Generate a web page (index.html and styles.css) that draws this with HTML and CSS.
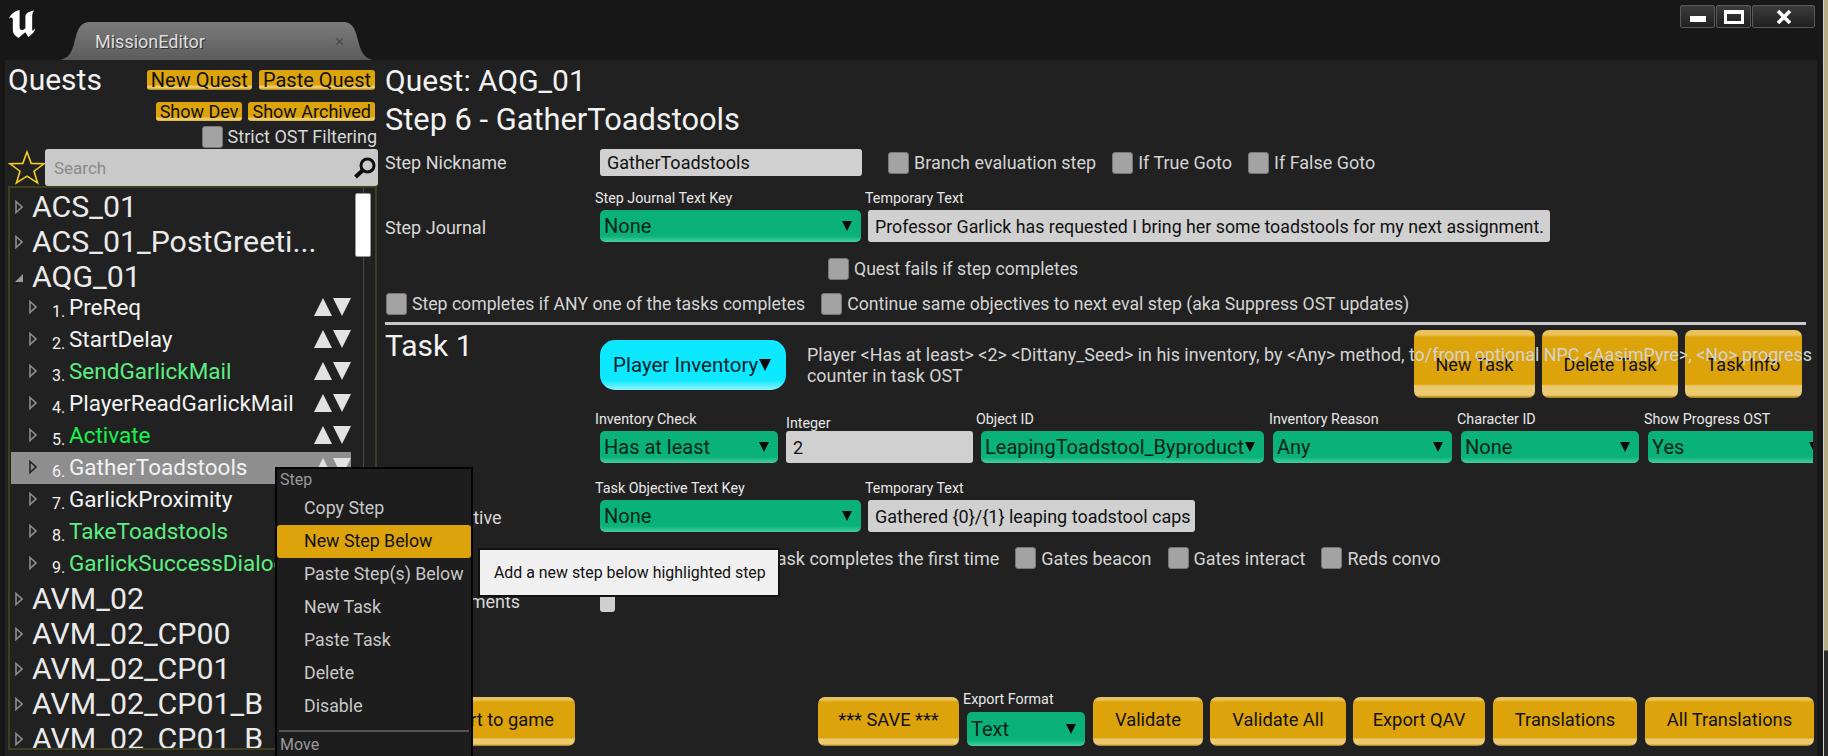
FILE: index.html
```html
<!DOCTYPE html>
<html lang="en">
  <head>
    <meta charset="UTF-8" />
    <title>MissionEditor</title>
    <link rel="stylesheet" href="styles.css">
  </head>
  <body>
    <svg class="defs" width="0" height="0">
      <symbol id="tw" viewBox="0 0 8 14"><path d="M1 1.5 L7 7 L1 12.5 Z" fill="none" stroke="currentColor" stroke-width="1.6"/></symbol>
    </svg>

    <header class="titlebar">
      <svg class="ue-logo" viewBox="0 0 30 30"><path d="M1 10 C3 5 7 2 12 1 L12 19 C12 22 15 23 18 20 L18 8 C18 5 20 3 27 1.5 C25 4 25 6 25 9 L25 21 C25 23 26 23 28 20 C28 24 24 27 21 29 L18 24 C15 26 13 28 11 30 C8 28 5 26 5 22 L5 11 C5 9 3 8 1 10 Z" fill="#fff"/></svg>
      <div class="tab">
        <span class="tab-label">MissionEditor</span>
        <span class="tab-close">×</span>
      </div>
      <div class="win-btns">
        <div class="win-btn win-min"><i></i></div>
        <div class="win-btn win-max"><i></i></div>
        <div class="win-btn win-close">
          <svg width="16" height="16" viewBox="0 0 16 16"><path d="M2 2 L14 14 M14 2 L2 14" stroke="#fff" stroke-width="3.6"/></svg>
        </div>
      </div>
    </header>

    <div class="panel">
      <aside class="sidebar">
        <div class="side-head">
          <h2>Quests</h2>
          <div class="side-btns">
            <button class="mini">New Quest</button>
            <button class="mini">Paste Quest</button>
          </div>
        </div>
        <div class="side-btns second">
          <button class="mini small">Show Dev</button>
          <button class="mini small">Show Archived</button>
        </div>
        <label class="strict"><span class="cb"></span>Strict OST Filtering</label>
        <div class="search-row">
          <svg class="star" width="38" height="35" viewBox="0 0 38 35"><path d="M19 2 L23.2 13.4 L36 13.8 L26 21.2 L29.6 33 L19 26.2 L8.4 33 L12 21.2 L2 13.8 L14.8 13.4 Z" fill="none" stroke="#f2cb24" stroke-width="1.6"/></svg>
          <div class="search">
            <span>Search</span>
            <svg width="24" height="24" viewBox="0 0 24 24"><circle cx="14.5" cy="9.5" r="6.5" fill="none" stroke="#0c0c0c" stroke-width="3"/><path d="M9.5 14.5 L2.5 21" stroke="#0c0c0c" stroke-width="4"/></svg>
          </div>
        </div>

        <div class="tree">
          <div class="scroll-track"></div>
          <div class="scroll-thumb"></div>
          <div class="quest"><svg class="tw"><use href="#tw"/></svg>ACS_01</div>
          <div class="quest"><svg class="tw"><use href="#tw"/></svg>ACS_01_PostGreeti...</div>
          <div class="quest"><span class="tw-open"></span>AQG_01</div>
          <ul class="steps">
            <li class="step"><svg class="tw"><use href="#tw"/></svg><span class="num">1.</span><span class="name">PreReq</span><span class="order"><i class="up"></i><i class="down"></i></span></li>
            <li class="step"><svg class="tw"><use href="#tw"/></svg><span class="num">2.</span><span class="name">StartDelay</span><span class="order"><i class="up"></i><i class="down"></i></span></li>
            <li class="step"><svg class="tw"><use href="#tw"/></svg><span class="num">3.</span><span class="name soft-green">SendGarlickMail</span><span class="order"><i class="up"></i><i class="down"></i></span></li>
            <li class="step"><svg class="tw"><use href="#tw"/></svg><span class="num">4.</span><span class="name">PlayerReadGarlickMail</span><span class="order"><i class="up"></i><i class="down"></i></span></li>
            <li class="step"><svg class="tw"><use href="#tw"/></svg><span class="num">5.</span><span class="name green">Activate</span><span class="order"><i class="up"></i><i class="down"></i></span></li>
            <li class="step selected"><svg class="tw"><use href="#tw"/></svg><span class="num">6.</span><span class="name">GatherToadstools</span><span class="order"><i class="up"></i><i class="down"></i></span></li>
            <li class="step"><svg class="tw"><use href="#tw"/></svg><span class="num">7.</span><span class="name">GarlickProximity</span></li>
            <li class="step"><svg class="tw"><use href="#tw"/></svg><span class="num">8.</span><span class="name soft-green">TakeToadstools</span></li>
            <li class="step"><svg class="tw"><use href="#tw"/></svg><span class="num">9.</span><span class="name soft-green">GarlickSuccessDialog</span></li>
          </ul>
          <div class="quest"><svg class="tw"><use href="#tw"/></svg>AVM_02</div>
          <div class="quest"><svg class="tw"><use href="#tw"/></svg>AVM_02_CP00</div>
          <div class="quest"><svg class="tw"><use href="#tw"/></svg>AVM_02_CP01</div>
          <div class="quest"><svg class="tw"><use href="#tw"/></svg>AVM_02_CP01_B</div>
          <div class="quest"><svg class="tw"><use href="#tw"/></svg>AVM_02_CP01_B</div>
        </div>
      </aside>

      <main class="editor">
        <h1 class="quest-title">Quest: AQG_01</h1>
        <h1 class="step-title">Step 6 - GatherToadstools</h1>

        <div class="row nick-row">
          <div class="row-label">Step Nickname</div>
          <div class="input nick">GatherToadstools</div>
          <label class="check branch"><span class="cb"></span>Branch evaluation step</label>
          <label class="check"><span class="cb"></span>If True Goto</label>
          <label class="check"><span class="cb"></span>If False Goto</label>
        </div>

        <div class="row journal-row">
          <div class="row-label">Step Journal</div>
          <div class="field w-key">
            <div class="field-label">Step Journal Text Key</div>
            <div class="select">None</div>
          </div>
          <div class="field">
            <div class="field-label temp-label">Temporary Text</div>
            <div class="input journal-text">Professor Garlick has requested I bring her some toadstools for my next assignment.</div>
          </div>
        </div>

        <div class="row fails-row">
          <label class="check"><span class="cb"></span>Quest fails if step completes</label>
        </div>

        <div class="row any-row">
          <label class="check"><span class="cb"></span>Step completes if ANY one of the tasks completes</label>
          <label class="check"><span class="cb"></span>Continue same objectives to next eval step (aka Suppress OST updates)</label>
        </div>

        <hr class="divider" />

        <div class="row task-row">
          <h2 class="task-title">Task 1</h2>
          <button class="type-btn">Player Inventory</button>
          <div class="task-btns">
            <button class="gold tall w-new">New Task</button>
            <button class="gold tall w-del">Delete Task</button>
            <button class="gold tall w-info">Task Info</button>
          </div>
          <p class="task-desc">Player &lt;Has at least&gt; &lt;2&gt; &lt;Dittany_Seed&gt; in his inventory, by &lt;Any&gt; method, to/from optional NPC &lt;AasimPyre&gt;, &lt;No&gt; progress<br />counter in task OST</p>
        </div>

        <div class="row params-row">
          <div class="field w-check">
            <div class="field-label">Inventory Check</div>
            <div class="select">Has at least</div>
          </div>
          <div class="field w-int">
            <div class="field-label int-label">Integer</div>
            <div class="input">2</div>
          </div>
          <div class="field w-obj">
            <div class="field-label">Object ID</div>
            <div class="select">LeapingToadstool_Byproduct</div>
          </div>
          <div class="field w-reason">
            <div class="field-label">Inventory Reason</div>
            <div class="select">Any</div>
          </div>
          <div class="field w-char">
            <div class="field-label">Character ID</div>
            <div class="select">None</div>
          </div>
          <div class="field w-show">
            <div class="field-label">Show Progress OST</div>
            <div class="select">Yes</div>
          </div>
        </div>

        <div class="row objective-row">
          <div class="row-label">Task Objective</div>
          <div class="field w-key">
            <div class="field-label">Task Objective Text Key</div>
            <div class="select">None</div>
          </div>
          <div class="field">
            <div class="field-label temp-label">Temporary Text</div>
            <div class="input objective-text">Gathered {0}/{1} leaping toadstool caps</div>
          </div>
        </div>

        <div class="row gates-row">
          <label class="check"><span>Task completes the first time</span></label>
          <label class="check"><span class="cb"></span>Gates beacon</label>
          <label class="check"><span class="cb"></span>Gates interact</label>
          <label class="check"><span class="cb"></span>Reds convo</label>
        </div>

        <div class="row req-row">
          <div class="row-label req-label">Requirements</div>
          <span class="cb light"></span>
        </div>

        <div class="bottom-bar">
          <button class="gold export-game">Export to game</button>
          <div class="bottom-right">
            <button class="gold w-save">*** SAVE ***</button>
            <div class="field w-format">
              <div class="field-label format-label">Export Format</div>
              <div class="select format">Text</div>
            </div>
            <button class="gold w-val">Validate</button>
            <button class="gold w-valall">Validate All</button>
            <button class="gold w-qav">Export QAV</button>
            <button class="gold w-trans">Translations</button>
            <button class="gold w-alltrans">All Translations</button>
          </div>
        </div>
      </main>
    </div>

    <div class="edge"></div>

    <div class="menu">
      <div class="menu-head">Step</div>
      <div class="menu-item">Copy Step</div>
      <div class="menu-item active">New Step Below</div>
      <div class="menu-item">Paste Step(s) Below</div>
      <div class="menu-item">New Task</div>
      <div class="menu-item">Paste Task</div>
      <div class="menu-item">Delete</div>
      <div class="menu-item">Disable</div>
      <div class="menu-sep"></div>
      <div class="menu-head">Move</div>
    </div>

    <div class="tooltip">Add a new step below highlighted step</div>
  </body>
</html>
```

FILE: styles.css
```css
* {
  box-sizing: border-box;
}
html,
body {
  margin: 0;
  height: 756px;
  overflow: hidden;
}
body {
  position: relative;
  background: #171717;
  font-family: Roboto, sans-serif;
  color: #d8d8d8;
  font-size: 18px;
}
.defs {
  position: absolute;
}
button {
  font-family: Roboto, sans-serif;
  border: 0;
  padding: 0;
  color: #111;
}

/* desktop behind the editor window */
.edge {
  position: absolute;
  right: 0;
  top: 0;
  width: 5px;
  height: 756px;
  border-left: 1px solid #d4d4d4;
  background: linear-gradient(#b5ad8a 0, #b5ad8a 650px, #2c2c2c 651px);
}

/* title bar */
.titlebar {
  height: 60px;
  display: flex;
  align-items: flex-end;
  padding-left: 8px;
}
.ue-logo {
  width: 29px;
  height: 29px;
  align-self: flex-start;
  margin-top: 9px;
}
.tab {
  width: 313px;
  height: 38px;
  margin-left: 23px;
  display: flex;
  align-items: center;
  justify-content: space-between;
  padding: 0 29px 0 35px;
  background: linear-gradient(#7b7b7b, #5c5c5c);
  clip-path: path("M0 38 C8 36 11 32 14 22 C17 10 19 0 30 0 L283 0 C294 0 296 10 299 22 C302 32 305 36 313 38 Z");
}
.tab-label {
  color: #dedede;
  text-shadow: 1px 1px 0 #333;
}
.tab-close {
  color: #4c4c4c;
  font-size: 17px;
}
.win-btns {
  display: flex;
  align-self: flex-start;
  gap: 1px;
  margin: 5px 13px 0 auto;
}
.win-btn {
  height: 23px;
  width: 35px;
  background: linear-gradient(#3c3c3c, #202020);
  border: 1px solid #5a5a5a;
  border-radius: 2px;
  display: flex;
  align-items: center;
  justify-content: center;
}
.win-min i {
  width: 16px;
  height: 6px;
  margin-top: 4px;
  background: #fff;
}
.win-max i {
  width: 20px;
  height: 14px;
  border: 3px solid #fff;
  border-top-width: 4px;
}
.win-close {
  width: 63px;
}

/* panel */
.panel {
  margin: 0 11px 0 5px;
  height: 696px;
  background: #212121;
  display: flex;
}

/* left list */
.sidebar {
  width: 375px;
  padding-left: 3px;
  flex: none;
}
.side-head {
  display: flex;
  justify-content: space-between;
  height: 40px;
  padding-right: 5px;
}
.side-head h2 {
  margin: 0;
  font-size: 30px;
  font-weight: 400;
  color: #f2f2f2;
  line-height: 40px;
}
.side-btns {
  display: flex;
  gap: 7px;
  margin-top: 10px;
  height: 20px;
}
.side-btns.second {
  justify-content: flex-end;
  padding-right: 5px;
  margin-top: 2px;
  gap: 6px;
  height: 19px;
}
.mini {
  height: 20px;
  padding: 0 4px;
  font-size: 20px;
  line-height: 19px;
  border-radius: 3px;
  background: linear-gradient(#dca30a 0, #dca30a 15px, #efc964 16px, #efc964 18px, #a47a0a 20px);
  white-space: nowrap;
}
.mini.small {
  height: 19px;
  font-size: 18px;
  line-height: 18px;
}
.strict {
  display: flex;
  align-items: center;
  justify-content: flex-end;
  gap: 5px;
  height: 21px;
  margin-top: 5px;
  padding-right: 3px;
  white-space: nowrap;
}
.search-row {
  display: flex;
  height: 37px;
  margin-top: 2px;
  padding-right: 2px;
}
.star {
  flex: none;
  margin-top: 1px;
}
.search {
  flex: 1;
  margin-left: -1px;
  background: #c9c9c9;
  border-radius: 3px;
  display: flex;
  align-items: center;
  justify-content: space-between;
  padding: 0 1px 0 9px;
  color: #8a8a8a;
  font-size: 17px;
}

.tree {
  position: relative;
  width: 369px;
  height: 564px;
  border: 2px solid #3f3f1e;
  overflow: hidden;
  padding-top: 1px;
}
.scroll-track {
  position: absolute;
  left: 353px;
  top: 0;
  bottom: 0;
  width: 1px;
  background: #4a4a4a;
}
.scroll-thumb {
  position: absolute;
  left: 345px;
  top: 5px;
  width: 16px;
  height: 64px;
  background: #fff;
  border: 1px solid #999;
  border-radius: 2px;
}
.quest {
  height: 35px;
  display: flex;
  align-items: center;
  font-size: 30.3px;
  color: #eaeaea;
  padding-left: 5px;
  white-space: nowrap;
}
.quest .tw {
  margin-right: 9px;
}
.tw {
  width: 8px;
  height: 14px;
  flex: none;
  color: #8d8d8d;
}
.tw-open {
  width: 0;
  height: 0;
  margin-right: 9px;
  border-left: 8px solid transparent;
  border-bottom: 8px solid #9a9a9a;
  margin-top: 2px;
}
.steps {
  list-style: none;
  margin: -2px 0 1px;
  padding: 0;
}
.step {
  height: 32px;
  width: 340px;
  margin-left: 1px;
  padding: 0 0 2px 18px;
  display: flex;
  align-items: center;
  color: #f2f2f2;
  font-size: 22.5px;
  white-space: nowrap;
}
.step .tw {
  margin-right: 15px;
}
.step.selected {
  background: #8e8e8e;
}
.step.selected .tw {
  color: #222;
}
.num {
  font-size: 16px;
  width: 17px;
  margin-top: 8px;
}
.soft-green {
  color: #5cee80;
}
.green {
  color: #16f24e;
}
.order {
  margin-left: auto;
  display: flex;
  gap: 1px;
}
.up,
.down {
  width: 0;
  height: 0;
  border-left: 9px solid transparent;
  border-right: 9px solid transparent;
}
.up {
  border-bottom: 18px solid #e2e2e2;
}
.down {
  border-top: 18px solid #e2e2e2;
}

/* editor */
.editor {
  flex: 1;
  min-width: 0;
  display: flex;
  flex-direction: column;
  padding: 2px 0 10px 5px;
  position: relative;
}
.quest-title,
.step-title {
  margin: 0;
  font-size: 30px;
  font-weight: 400;
  line-height: 38px;
  height: 38px;
  color: #f2f2f2;
  white-space: nowrap;
}
.step-title {
  margin-top: 1px;
  font-size: 30.8px;
}
.row {
  display: flex;
  white-space: nowrap;
}
.row-label {
  width: 215px;
  flex: none;
}
.cb {
  display: inline-block;
  width: 21px;
  height: 22px;
  flex: none;
  background: #a3a3a3;
  border: 1px solid #777;
  border-radius: 3px;
}
.cb.light {
  width: 15px;
  height: 21px;
  background: #cfcfcf;
  border: 0;
  align-self: flex-end;
}
.check {
  display: flex;
  align-items: center;
  gap: 5px;
  color: #d4d4d4;
}
.input {
  height: 32px;
  background: #d0d0d0;
  border-radius: 3px;
  color: #111;
  font-size: 18px;
  display: flex;
  align-items: center;
  padding: 0 7px;
}
.select {
  height: 32px;
  padding: 0 4px;
  border-radius: 5px;
  background: linear-gradient(#0ab27a 0, #0ab27a calc(100% - 6px), #47cfa0 100%);
  color: #052518;
  font-size: 20px;
  display: flex;
  align-items: center;
  justify-content: space-between;
}
.select::after {
  content: "";
  border-left: 5px solid transparent;
  border-right: 5px solid transparent;
  border-top: 10px solid #0a0a0a;
  margin-right: 5px;
}
.field-label {
  color: #e8e8e8;
  font-size: 14.3px;
  line-height: 16px;
  margin: 0 0 4px -5px;
}
.temp-label {
  margin-left: -3px;
}
.gold {
  border-radius: 7px;
  font-size: 18.3px;
  padding-bottom: 4px;
  background: linear-gradient(#eac25a 0, #eac25a 3px, #dca30a 5px, #dca30a calc(100% - 8px), #ecca70 calc(100% - 7px), #ecca70 calc(100% - 2px), #a07708 100%);
}
.gold.tall {
  height: 68px;
  padding-bottom: 0;
  font-size: 18px;
  background: linear-gradient(#eac25a 0, #eac25a 5px, #dca30a 7px, #dca30a calc(100% - 14px), #ecca70 calc(100% - 12px), #ecca70 calc(100% - 3px), #a07708 100%);
}

.nick-row {
  height: 27px;
  margin-top: 10px;
  align-items: center;
}
.nick {
  width: 262px;
  height: 27px;
}
.branch {
  margin-left: 26px;
}
.nick-row .check + .check {
  margin-left: 16px;
}
.journal-row {
  margin-top: 14px;
}
.journal-row > .row-label,
.objective-row > .row-label {
  margin-top: 27px;
}
.w-key {
  width: 261px;
  margin-right: 7px;
}
.journal-text {
  width: 682px;
  font-size: 17.8px;
}
.fails-row {
  height: 22px;
  margin-top: 16px;
  padding-left: 443px;
  font-size: 17.65px;
}
.any-row {
  height: 22px;
  margin-top: 13px;
  padding-left: 1px;
  gap: 16px;
  font-size: 17.65px;
}
.divider {
  width: 1421px;
  height: 3px;
  margin: 7px 0 0;
  border: 0;
  background: #c8c8c8;
}
.task-row {
  position: relative;
  height: 65px;
  padding-top: 15px;
}
.task-title {
  width: 215px;
  margin: -13px 0 0;
  font-size: 30px;
  font-weight: 400;
  line-height: 38px;
  color: #f2f2f2;
  flex: none;
}
.type-btn {
  width: 186px;
  height: 50px;
  border-radius: 15px;
  background: linear-gradient(#0ce8ff 0, #0ce8ff calc(100% - 10px), #8ff4ff 100%);
  font-size: 20.5px;
  color: #04242c;
  display: flex;
  align-items: center;
  gap: 1px;
  padding: 0 0 0 13px;
}
.type-btn::after {
  content: "";
  border-left: 6px solid transparent;
  border-right: 6px solid transparent;
  border-top: 12px solid #0a0a0a;
}
.task-desc {
  position: relative;
  margin: 4px 0 0 21px;
  font-size: 17.9px;
  line-height: 21px;
  color: #d4d4d4;
}
.task-btns {
  position: absolute;
  top: 5px;
  left: 1029px;
  display: flex;
  gap: 7px;
}
.w-new {
  width: 121px;
}
.w-del {
  width: 136px;
}
.w-info {
  width: 117px;
}
.params-row {
  margin-top: 21px;
  padding-left: 215px;
  overflow: hidden;
  width: 1428px;
}
.params-row .field {
  flex: none;
}
.params-row .field-label {
  margin-left: 0;
}
.w-check {
  width: 178px;
  margin-right: 8px;
}
.params-row .w-check .field-label,
.params-row .w-obj .field-label {
  margin-left: -5px;
}
.w-int {
  width: 187px;
  margin-right: 8px;
}
.int-label {
  margin-top: 4px;
  margin-bottom: 0;
}
.w-obj {
  width: 283px;
  margin-right: 9px;
}
.params-row .w-reason .field-label,
.params-row .w-char .field-label,
.params-row .w-show .field-label {
  margin-left: -4px;
}
.w-reason {
  width: 179px;
  margin-right: 9px;
}
.w-char {
  width: 178px;
  margin-right: 9px;
}
.w-show {
  width: 180px;
}
.objective-row {
  margin-top: 17px;
}
.objective-text {
  width: 327px;
}
.gates-row {
  height: 22px;
  margin-top: 15px;
  padding-left: 382px;
  gap: 16px;
}
.req-row {
  height: 21px;
  margin-top: 22px;
  align-items: center;
}
.req-label {
  padding-left: 24px;
}
.bottom-bar {
  margin-top: auto;
  display: flex;
  align-items: flex-end;
}
.export-game {
  width: 160px;
  height: 49px;
  margin-left: 30px;
  flex: none;
  text-align: right;
  padding-right: 21px;
}
.bottom-right {
  display: flex;
  align-items: flex-end;
  gap: 8px;
  margin-left: 243px;
}
.bottom-right .gold {
  height: 49px;
}
.w-save {
  width: 141px;
}
.w-format {
  width: 118px;
}
.format-label {
  margin-bottom: 5px;
  margin-left: -4px;
}
.select.format {
  height: 34px;
}
.w-val {
  width: 110px;
}
.w-valall {
  width: 136px;
  margin-left: -1px;
}
.w-qav {
  width: 132px;
  margin-left: -1px;
}
.w-trans {
  width: 144px;
}
.w-alltrans {
  width: 169px;
}

/* context menu */
.menu {
  position: absolute;
  left: 275px;
  top: 467px;
  width: 198px;
  height: 300px;
  background: #1d1d1d;
  border: 2px solid #050505;
  padding-top: 1px;
}
.menu-head {
  height: 22px;
  line-height: 20px;
  padding-left: 3px;
  font-size: 16px;
  color: #9a9a9a;
}
.menu-item {
  height: 33px;
  line-height: 31px;
  padding-left: 27px;
  font-size: 17.8px;
  color: #c8c8c8;
  white-space: nowrap;
}
.menu-item.active {
  background: #dca30a;
  color: #111;
  border-radius: 3px;
}
.menu-sep {
  height: 2px;
  margin: 7px 2px 3px;
  background: #555;
}
.tooltip {
  position: absolute;
  left: 478px;
  top: 548px;
  width: 302px;
  height: 49px;
  background: #f0f0f0;
  border: 2px solid #111;
  color: #111;
  font-size: 15.9px;
  line-height: 45px;
  padding-left: 14px;
  white-space: nowrap;
}
```
